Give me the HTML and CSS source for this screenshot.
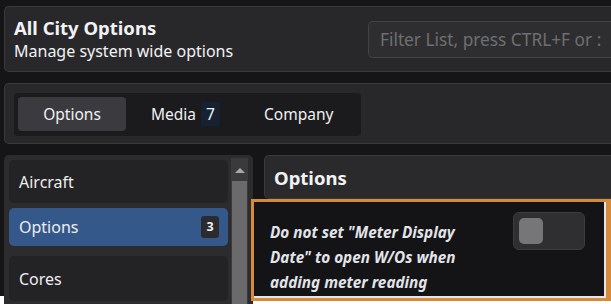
FILE: index.html
```html
<!DOCTYPE html>
<html>
<head>
<meta charset="utf-8">
<link rel="stylesheet" href="styles.css">
</head>
<body>
<div class="page">
  <div class="card header">
    <div class="titles">
      <div class="title">All City Options</div>
      <div class="subtitle">Manage system wide options</div>
    </div>
    <div class="filter">Filter List, press CTRL+F or :</div>
  </div>
  <div class="card tabs-card">
    <div class="tabbar">
      <div class="tab active">Options</div>
      <div class="tab">Media <span class="count">7</span></div>
      <div class="tab">Company</div>
    </div>
  </div>
  <div class="main">
    <div class="list-panel">
      <div class="list">
        <div class="item item-a">Aircraft</div>
        <div class="item item-sel">Options <span class="badge">3</span></div>
        <div class="item item-c">Cores</div>
      </div>
      <div class="scrollbar">
        <div class="scroll-up"><span class="arrow"></span></div>
        <div class="thumb"></div>
      </div>
    </div>
    <div class="detail">
      <div class="detail-head">Options</div>
    </div>
  </div>
  <div class="focus-box">
    <div class="option-text">Do not set "Meter Display Date" to open W/Os when adding meter reading</div>
    <div class="toggle"><div class="knob"></div></div>
  </div>
</div>
</body>
</html>
```
FILE: styles.css
```css
html { background: #ffffff; }
body {
  margin: 0;
  width: 611px;
  height: 304px;
  overflow: hidden;
  font-family: "Noto Sans", "Open Sans", sans-serif;
  color: #f2f2f4;
}
.page {
  position: relative;
  height: 296px;
  background: #151517;
  padding: 6px 0 0 4px;
  box-sizing: border-box;
  width: 611px;
}
.card {
  background: #28282b;
  border: 1px solid #3a3a3d;
  border-right: none;
  border-radius: 5px 0 0 5px;
  box-sizing: border-box;
}
.header {
  height: 66px;
  display: flex;
  align-items: flex-start;
  padding: 9px 0 0 9px;
}
.titles { width: 354px; flex: none; }
.title {
  font-size: 18.5px;
  font-weight: 700;
  line-height: 24px;
}
.subtitle {
  font-size: 16px;
  line-height: 22px;
}
.filter {
  margin-top: 5px;
  height: 37px;
  flex: 1;
  box-sizing: border-box;
  border: 1px solid #434346;
  border-right: none;
  border-radius: 5px 0 0 5px;
  background: #2e2e31;
  color: #6f6f72;
  font-size: 17.3px;
  line-height: 35px;
  padding-left: 11px;
  white-space: nowrap;
  overflow: hidden;
}
.tabs-card {
  margin-top: 11px;
  height: 61px;
  padding: 9px 0 0 9px;
}
.tabbar {
  display: inline-flex;
  background: #1b1b1d;
  border-radius: 4px;
  padding: 4px;
  height: 43px;
  box-sizing: border-box;
}
.tab {
  display: flex;
  align-items: center;
  padding: 0 24px 0 25px;
  font-size: 15.5px;
  border-radius: 4px;
  height: 34px;
  color: #f0f0f2;
}
.tab.active { background: #3b3b3f; width: 108px; box-sizing: border-box; justify-content: center; padding: 0; }
.count {
  display: inline-block;
  margin-left: 5px;
  background: #162131;
  width: 19px;
  height: 24px;
  line-height: 24px;
  text-align: center;
  border-radius: 2px;
  margin-right: -5px;
}
.main {
  margin-top: 11px;
  display: flex;
  gap: 11px;
  align-items: flex-start;
}
.list-panel {
  width: 249px;
  flex: none;
  height: 160px;
  background: #2c2c2f;
  border-radius: 5px;
  display: flex;
  padding: 5px 5px 0 5px;
  box-sizing: border-box;
  gap: 3px;
}
.list { width: 219px; }
.item {
  display: flex;
  align-items: center;
  justify-content: space-between;
  padding: 0 10px;
  font-size: 16px;
  border-radius: 5px;
  background: #232326;
  color: #ededf0;
}
.item-a { height: 43px; }
.item-sel { height: 38px; margin-top: 5px; background: #34588a; padding-right: 9px; }
.item-c { height: 45px; margin-top: 10px; }
.badge {
  background: #2b2b2e;
  font-size: 12.5px;
  font-weight: 700;
  width: 18px;
  height: 22px;
  line-height: 22px;
  text-align: center;
  border-radius: 3px;
}
.scrollbar {
  width: 17px;
  background: #3a3a3c;
  margin-top: -2px;
  display: flex;
  flex-direction: column;
  align-items: stretch;
}
.scroll-up {
  height: 23px;
  display: flex;
  justify-content: center;
  padding-top: 10px;
  box-sizing: border-box;
}
.arrow {
  width: 0; height: 0;
  border-left: 5px solid transparent;
  border-right: 5px solid transparent;
  border-bottom: 5px solid #a8a8aa;
}
.thumb { flex: 1; background: #6a6a6c; margin: 0 1px; }
.detail { flex: 1; }
.detail-head {
  height: 44px;
  background: #2a2a2d;
  border: 1px solid #3a3a3d;
  border-right: none;
  border-radius: 5px 0 0 5px;
  box-sizing: border-box;
  padding-left: 9px;
  font-size: 18.5px;
  font-weight: 700;
  line-height: 44px;
}
.focus-box {
  position: absolute;
  left: 251px;
  top: 199px;
  width: 360px;
  height: 102px;
  box-sizing: border-box;
  border: 3px solid #d68b3c;
  border-right-width: 5px;
  background: #141416;
  box-shadow: inset -2px -2px 0 #e6e6e8;
  display: flex;
  justify-content: space-between;
  padding: 10px 21px 0 16px;
}
.option-text {
  width: 215px;
  padding-top: 8px;
  font-size: 15.3px;
  font-weight: 700;
  font-style: italic;
  line-height: 25px;
  color: #e2e4ea;
}
.toggle {
  width: 72px;
  height: 38px;
  box-sizing: border-box;
  background: #2f2f32;
  border: 1px solid #3c3c3f;
  border-radius: 6px;
  padding: 5px;
}
.knob {
  width: 24px;
  height: 26px;
  background: #767678;
  border-radius: 5px;
}
```
